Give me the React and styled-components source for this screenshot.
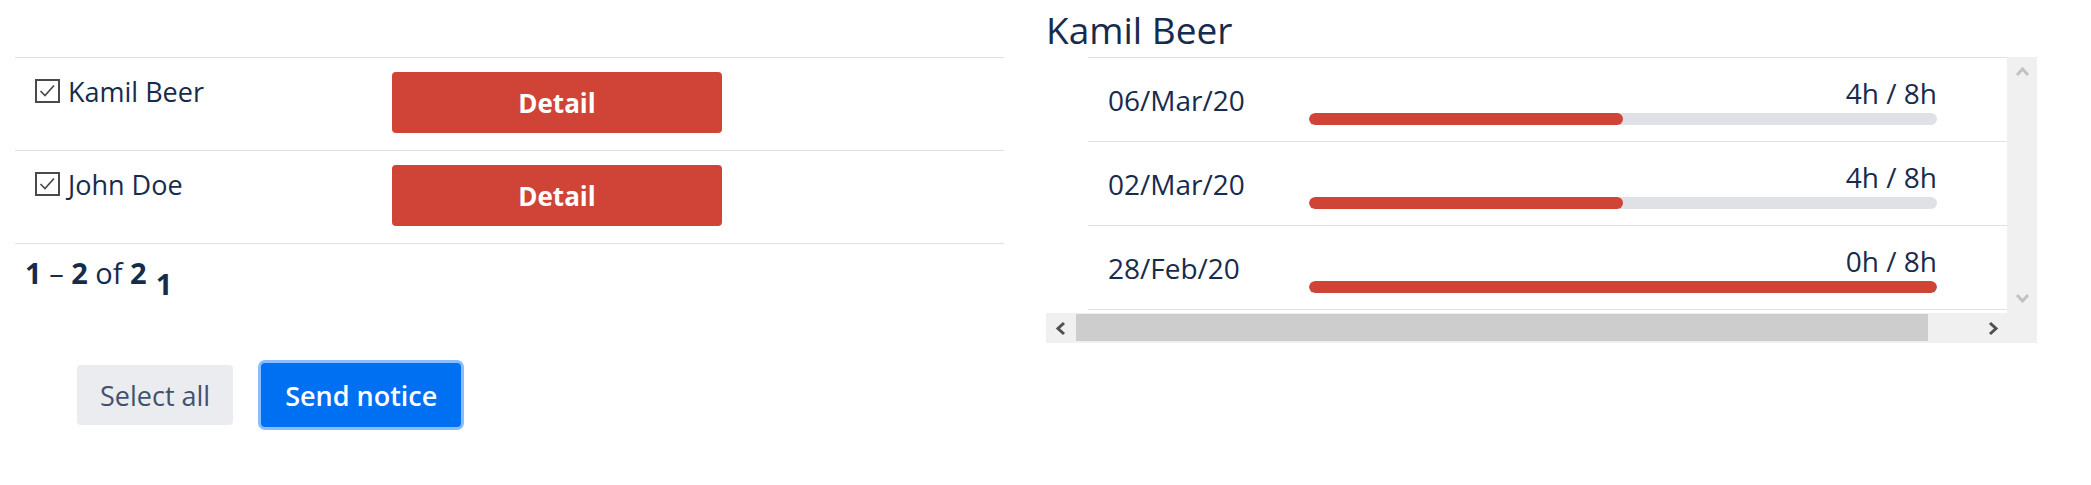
import styled, { createGlobalStyle } from "styled-components";

const GlobalStyle = createGlobalStyle`
  body {
    margin: 0;
    background: #fff;
    font-family: "Open Sans", "Noto Sans", Arial, sans-serif;
    color: #172b4d;
  }
`;

const Page = styled.div`
  height: 485px;
  overflow: hidden;
  display: flex;
  flex-direction: column;
`;

const Main = styled.div`
  display: flex;
  align-items: flex-start;
  gap: 42px;
  padding-left: 15px;
`;

/* left: people list */
const LeftPanel = styled.section`
  width: 989px;
  padding-top: 57px;
`;

const PeopleList = styled.div`
  border-bottom: 1px solid #dfe1e6;
`;

const PersonRow = styled.div`
  display: grid;
  grid-template-columns: 377px 330px 1fr;
  height: 92px;
  border-top: 1px solid #dfe1e6;
`;

const NameCell = styled.label`
  display: flex;
  align-items: flex-start;
  gap: 8px;
  padding: 14px 0 0 20px;
  font-size: 27px;
  line-height: 40px;
  color: #172b4d;

  svg {
    margin-top: 7px;
    flex: none;
  }
`;

const DetailButton = styled.button`
  margin-top: 14px;
  height: 61px;
  width: 330px;
  border: none;
  border-radius: 4px;
  background: #d04437;
  color: #fff;
  font-family: inherit;
  font-size: 26px;
  font-weight: 700;
  cursor: pointer;
`;

const Pager = styled.div`
  height: 40px;
  padding: 9px 0 0 10px;
  font-size: 29px;
  line-height: 40px;
  color: #172b4d;

  b {
    font-weight: 700;
  }
`;

const PageNum = styled.b`
  margin-left: 9px;
  vertical-align: -11px;
`;

const ButtonBar = styled.div`
  display: flex;
  align-items: center;
  gap: 28px;
  margin-top: 70px;
  padding-left: 62px;
`;

const Button = styled.button`
  height: ${(p) => (p.primary ? "64px" : "60px")};
  padding: 0 ${(p) => (p.primary ? "24px" : "23px")};
  border: none;
  border-radius: 4px;
  font-family: inherit;
  font-size: 27px;
  font-weight: ${(p) => (p.primary ? 600 : 400)};
  background: ${(p) => (p.primary ? "#0070f3" : "#ebecf0")};
  color: ${(p) => (p.primary ? "#fff" : "#42526e")};
  box-shadow: ${(p) => (p.primary ? "0 0 0 3px rgba(76,154,255,0.65)" : "none")};
  cursor: pointer;
`;

/* right: worklog */
const RightPanel = styled.section`
  width: 991px;
`;

const Title = styled.h2`
  margin: 0;
  padding-top: 2px;
  font-size: 37px;
  font-weight: 400;
  line-height: 55px;
  color: #172b4d;
`;

const ScrollBox = styled.div`
  display: grid;
  grid-template-columns: 961px 30px;
  grid-template-rows: 256px 30px;
`;

const Viewport = styled.div`
  overflow: hidden;
`;

const LogTable = styled.div`
  margin-left: 42px;
  width: 1000px;
  border-bottom: 1px solid #dfe1e6;
`;

const LogRow = styled.div`
  display: grid;
  grid-template-columns: 221px 628px 1fr;
  height: 83px;
  border-top: 1px solid #dfe1e6;
`;

const DateCell = styled.div`
  align-self: center;
  padding-left: 20px;
  font-size: 28px;
  line-height: 40px;
`;

const HoursCell = styled.div`
  padding-top: 15px;
  display: flex;
  flex-direction: column;
`;

const HoursLabel = styled.div`
  text-align: right;
  font-size: 28px;
  line-height: 40px;
`;

const Track = styled.div`
  height: 12px;
  border-radius: 6px;
  background: #dfe1e6;
  overflow: hidden;
`;

const Fill = styled.div`
  height: 100%;
  border-radius: 6px;
  background: #d04437;
`;

const VBar = styled.div`
  background: #f0f0f0;
  display: flex;
  flex-direction: column;
  justify-content: space-between;
`;

const HBar = styled.div`
  background: #f0f0f0;
  display: flex;
  align-items: stretch;
`;

const Corner = styled.div`
  background: #f0f0f0;
`;

const ArrowBtn = styled.div`
  flex: none;
  width: 30px;
  height: 30px;
  display: flex;
  align-items: center;
  justify-content: center;
`;

const Thumb = styled.div`
  flex: 0 0 852px;
  margin: 1px 0 2px;
  background: #cdcdcd;
`;

const Spacer = styled.div`
  flex: 1;
`;

const Footer = styled.div`
  margin-top: 54px;
  padding-left: 858px;
  font-size: 22px;
  line-height: 33px;
  color: #6b778c;
  white-space: nowrap;
`;

const Chevron = ({ dir, color }) => {
  const pts = {
    up: "2,10 7.5,4 13,10",
    down: "2,4 7.5,10 13,4",
    left: "10,2 4,7.5 10,13",
    right: "5,2 11,7.5 5,13",
  }[dir];
  return (
    <svg width="15" height="15" viewBox="0 0 15 15">
      <polyline points={pts} fill="none" stroke={color} strokeWidth="3" />
    </svg>
  );
};

const CheckBox = () => (
  <svg width="25" height="24" viewBox="0 0 25 24">
    <rect x="1" y="1" width="23" height="22" fill="none" stroke="#4a4a4a" strokeWidth="2" />
    <path d="M5.5 12 L10 16.5 L19 6.5" fill="none" stroke="#4a4a4a" strokeWidth="1.7" />
  </svg>
);

const people = ["Kamil Beer", "John Doe"];

const logs = [
  { date: "06/Mar/20", spent: 4, total: 8, fill: 50 },
  { date: "02/Mar/20", spent: 4, total: 8, fill: 50 },
  { date: "28/Feb/20", spent: 0, total: 8, fill: 100 },
];

export default function App() {
  return (
    <Page>
      <GlobalStyle />
      <Main>
        <LeftPanel>
          <PeopleList>
            {people.map((name) => (
              <PersonRow key={name}>
                <NameCell>
                  <CheckBox />
                  {name}
                </NameCell>
                <div>
                  <DetailButton>Detail</DetailButton>
                </div>
              </PersonRow>
            ))}
          </PeopleList>
          <Pager>
            <b>1</b> – <b>2</b> of <b>2</b>
            <PageNum>1</PageNum>
          </Pager>
          <ButtonBar>
            <Button>Select all</Button>
            <Button primary>Send notice</Button>
          </ButtonBar>
        </LeftPanel>

        <RightPanel>
          <Title>Kamil Beer</Title>
          <ScrollBox>
            <Viewport>
              <LogTable>
                {logs.map((l) => (
                  <LogRow key={l.date}>
                    <DateCell>{l.date}</DateCell>
                    <HoursCell>
                      <HoursLabel>
                        {l.spent}h / {l.total}h
                      </HoursLabel>
                      <Track>
                        <Fill style={{ width: `${l.fill}%` }} />
                      </Track>
                    </HoursCell>
                  </LogRow>
                ))}
              </LogTable>
            </Viewport>
            <VBar>
              <ArrowBtn>
                <Chevron dir="up" color="#c2c2c2" />
              </ArrowBtn>
              <ArrowBtn>
                <Chevron dir="down" color="#c2c2c2" />
              </ArrowBtn>
            </VBar>
            <HBar>
              <ArrowBtn>
                <Chevron dir="left" color="#505050" />
              </ArrowBtn>
              <Thumb />
              <Spacer />
              <ArrowBtn>
                <Chevron dir="right" color="#505050" />
              </ArrowBtn>
            </HBar>
            <Corner />
          </ScrollBox>
        </RightPanel>
      </Main>
      <Footer>Worklog summary for the selected team</Footer>
    </Page>
  );
}
